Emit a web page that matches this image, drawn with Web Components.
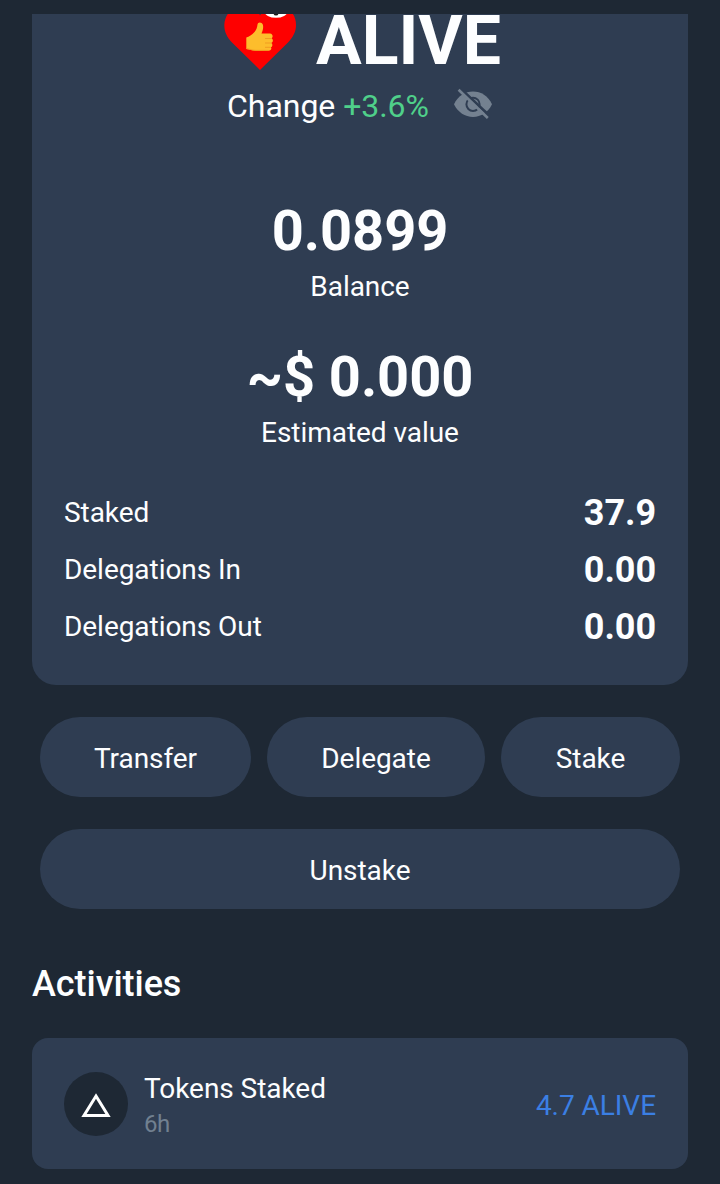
<!DOCTYPE html>
<html lang="en">
<head>
<meta charset="utf-8">
<title>ALIVE wallet</title>
<style>
  html, body { margin: 0; background: #1e2834; }
  body { height: 1184px; overflow: hidden; font-family: Roboto, "Liberation Sans", sans-serif; color: #fdfeff; letter-spacing: -0.05px; }
</style>
</head>
<body>
<wallet-screen></wallet-screen>
<script>
const define = (name, html) => customElements.define(name, class extends HTMLElement {
  constructor() {
    super();
    const t = document.createElement('template');
    t.innerHTML = html;
    this.attachShadow({ mode: 'open' }).append(t.content.cloneNode(true));
  }
});

define('token-logo', `
<style>:host{display:flex;align-items:flex-end;width:76px;height:80px} svg{display:block}</style>
<svg width="76" height="67" viewBox="222 14 76 67">
  <path d="M260 70 L232 42.500 C227 37 224.300 32 224.300 25 C225 11 236 5 246 6 C253 7 258 10 260 15.500 C263 10 268 7 275 6 C286 5 296 12 296 25 C296 32 293 37 288 42.500 Z" fill="#fe0000"/>
  <ellipse cx="276" cy="11.500" rx="11.500" ry="6.300" fill="#fff"/>
  <circle cx="276" cy="13" r="2.500" fill="#161616"/>
  <path d="M246.300 37.500 C249 36.500 252 35 254.500 32 C256.500 30 257.200 27 257.500 24.500 C257.800 21.800 261.800 21.800 262.900 24.800 C263.700 28 262.500 31 261.500 33.500 H270 C273 33.700 273.400 37.500 271.300 38.300 C273.500 39 273.300 42.300 271.300 43 C273 44 272.500 46.600 270.900 47.300 C272 48.800 271 50.800 268.500 50.800 H256 C252 50.800 250 49.300 246.300 49 Z" fill="#fdbd2c"/>
  <path d="M265 38.500 H271.300 M265 43 H271.200 M265 47.300 H270.700" stroke="#ee981f" stroke-width=".9" fill="none"/>
  <path d="M246.300 48.500 C250 49 252 50.400 256 50.400 H268.500" stroke="#ee981f" stroke-width=".9" fill="none"/>
</svg>`);

define('eye-off-icon', `
<style>:host{display:block;width:40px;height:36px;white-space:normal} svg{display:block}</style>
<svg width="40" height="36" viewBox="453 86 40 36">
  <path d="M454 104.300 C458 96 465 91.600 473 91.600 C481 91.600 488 96 492 104.300 C488 112.500 481 117 473 117 C465 117 458 112.500 454 104.300 Z" fill="#748190"/>
  <circle cx="473" cy="104.300" r="6.600" fill="none" stroke="#2f3d52" stroke-width="2"/>
  <path d="M459.800 88 L490.800 117" stroke="#2f3d52" stroke-width="3"/>
  <path d="M458.600 89.800 L487.800 118" stroke="#748190" stroke-width="2.600"/>
</svg>`);

define('token-title', `
<style>:host{display:flex;height:80px;justify-content:center;align-items:center;gap:18px;margin-top:-13px;padding-left:3px}
b{font-size:68px;line-height:80px;font-weight:700}</style>
<token-logo></token-logo><b><slot></slot></b>`);

define('change-row', `
<style>:host{display:flex;height:40px;margin-top:5px;justify-content:center;align-items:center;font-size:32px;line-height:40px}
.c{white-space:pre} .up{color:#4fd08a} eye-off-icon{margin:-4px 0 0 24px}</style>
<span class="c">Change <span class="up"><slot></slot></span></span><eye-off-icon></eye-off-icon>`);

define('figure-stat', `
<style>:host{display:flex;flex-direction:column;align-items:center}
b{font-size:56px;line-height:66px;font-weight:700} span{font-size:28px;line-height:34px;margin-top:6px}</style>
<b><slot></slot></b><span><slot name="label"></slot></span>`);

define('data-row', `
<style>:host{display:flex;height:57px;justify-content:space-between;align-items:center;font-size:28px}
b{font-size:36px;font-weight:700}</style>
<span><slot name="label"></slot></span><b><slot></slot></b>`);

define('pill-button', `
<style>:host{display:flex} button{all:unset;box-sizing:border-box;flex:1;height:80px;border-radius:40px;background:#2f3d52;font-size:28px;line-height:80px;padding-top:2px;text-align:center}</style>
<button><slot></slot></button>`);

define('token-card', `
<style>:host{display:flex;flex-direction:column;box-sizing:border-box;height:671px;background:#2f3d52;border-radius:0 0 24px 24px;padding:0 32px}
.a{margin-top:72px} .b{margin-top:40px} .rows{margin-top:34px}</style>
<token-title>ALIVE</token-title>
<change-row>+3.6%</change-row>
<figure-stat class="a">0.0899<span slot="label">Balance</span></figure-stat>
<figure-stat class="b">~$ 0.000<span slot="label">Estimated value</span></figure-stat>
<div class="rows">
<data-row><span slot="label">Staked</span>37.9</data-row>
<data-row><span slot="label">Delegations In</span>0.00</data-row>
<data-row><span slot="label">Delegations Out</span>0.00</data-row>
</div>`);

define('action-bar', `
<style>:host{display:grid;grid-template-columns:211px 218px 179px;gap:32px 16px;margin:32px 8px 0}
.wide{grid-column:1/-1}</style>
<pill-button>Transfer</pill-button><pill-button>Delegate</pill-button><pill-button>Stake</pill-button>
<pill-button class="wide">Unstake</pill-button>`);

define('activity-item', `
<style>:host{display:flex;box-sizing:border-box;height:131px;padding:0 32px;align-items:center;background:#2f3d52;border-radius:16px}
.ic{width:64px;height:64px;border-radius:50%;background:#1e2834;flex:none;margin-right:16px} svg{display:block}
.t{flex:1;display:flex;flex-direction:column;padding-top:5px} .n{font-size:28px;line-height:36px} .d{font-size:24px;line-height:34px;color:#718090;letter-spacing:-.4px}
.v{font-size:28px;line-height:34px;color:#3b7fe3;padding-top:4px}</style>
<div class="ic"><svg width="64" height="64" viewBox="0 0 64 64"><path d="M32 24 L44 43.500 H20 Z" fill="none" stroke="#fff" stroke-width="3"/></svg></div>
<div class="t"><span class="n"><slot></slot></span><span class="d"><slot name="time"></slot></span></div>
<span class="v"><slot name="amount"></slot></span>`);

define('activity-list', `
<style>:host{display:block;margin-top:54px} h2{margin:0 0 33px;font-size:36px;line-height:42px;font-weight:500}</style>
<h2>Activities</h2>
<activity-item>Tokens Staked<span slot="time">6h</span><span slot="amount">4.7 ALIVE</span></activity-item>`);

define('wallet-screen', `
<style>:host{display:block;box-sizing:border-box;width:720px;height:1184px;padding:14px 32px 0;overflow:hidden}</style>
<token-card></token-card><action-bar></action-bar><activity-list></activity-list>`);
</script>
</body>
</html>
